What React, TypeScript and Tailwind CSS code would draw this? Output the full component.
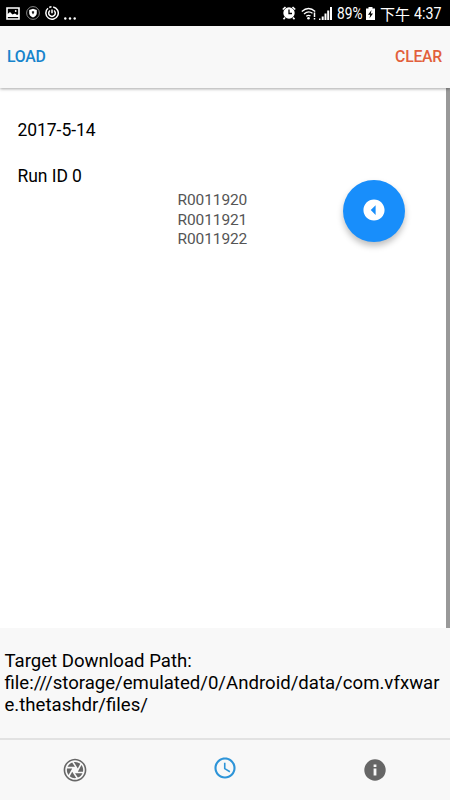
import { IoMdAperture, IoMdArrowDropleftCircle, IoMdTime } from "react-icons/io"

const files = ["R0011920", "R0011921", "R0011922"]

function StatusBar() {
  return (
    <div className="flex h-[26px] shrink-0 items-center bg-black pl-1.5 pr-2 text-white">
      {/* Notifications */}
      <svg className="h-[13px] w-3.5" viewBox="0 0 14 13" fill="none" stroke="currentColor">
        <path d="M1 1h12v11H1z" strokeWidth="1.6" />
        <path d="M1 10V7.5l3-2.5 2.5 2.5 2.5-1 2 1.5L13 7v3z" fill="currentColor" stroke="none" />
        <circle cx="9.7" cy="4" r="0.9" fill="currentColor" stroke="none" />
      </svg>
      <svg className="ml-1.5 h-3.5 w-3.5" viewBox="0 0 14 14" fill="none">
        <circle cx="7" cy="7" r="6.4" stroke="#aaa" strokeWidth="0.8" />
        <path d="M7 2.8l3.8 1.3v2.8c0 2-1.6 3.6-3.8 4.6-2.2-1-3.8-2.6-3.8-4.6V4.1z" fill="currentColor" />
        <path d="M5.9 5.3h2.2v1.5L7 8.6 5.9 6.8z" fill="#222" />
      </svg>
      <svg className="ml-[5px] h-3.5 w-3.5" viewBox="0 0 14 14" fill="none" stroke="currentColor">
        <path d="M8.2 0.9A6.2 6.2 0 1 1 3 2.3" strokeWidth="1.5" />
        <path d="M4.3 1.5A6.2 6.2 0 0 1 6.5 0.8" strokeWidth="1.5" />
        <path d="M5 4.5A3.3 3.3 0 1 0 9 4.5M7 3.5v3.8" strokeWidth="1.5" />
      </svg>
      <svg className="ml-[5px] mt-2.5 h-[3px] w-3" viewBox="0 0 12 3" fill="currentColor">
        <circle cx="1.3" cy="1.5" r="1.2" />
        <circle cx="6" cy="1.5" r="1.2" />
        <circle cx="10.7" cy="1.5" r="1.2" />
      </svg>

      <div className="flex-1" />

      {/* Alarm, wifi, signal */}
      <svg className="h-3.5 w-3.5" viewBox="0 0 14 14" fill="none" stroke="currentColor">
        <circle cx="7" cy="7" r="5.7" fill="currentColor" stroke="none" />
        <path d="M0.8 3.5L3.5 1M13.2 3.5L10.5 1M3 11.5L1.5 13.3M11 11.5l1.5 1.8" strokeWidth="1.7" />
        <path d="M7 3.5v4h3" stroke="#000" strokeWidth="1.3" />
      </svg>
      <svg className="ml-[5px] h-[13px] w-4" viewBox="0 0 16 13" fill="none" stroke="currentColor">
        <path d="M0.8 4.5Q7.5-1.5 14.2 4.5" strokeWidth="1.3" />
        <path d="M3 7Q7.5 3 11.5 6.3" strokeWidth="1.3" />
        <path d="M5.2 9.3Q7.5 7.5 9.5 9" strokeWidth="1.3" />
        <circle cx="7.5" cy="11.3" r="1.3" fill="currentColor" stroke="none" />
        <path d="M13.5 5.5v4.5M13.5 11v1.5" strokeWidth="1.5" />
      </svg>
      <svg className="ml-0.5 h-[13px] w-[13px]" viewBox="0 0 13 13" fill="currentColor">
        <path d="M0 11.5h1.5V13H0zM2.7 9.5h2V13h-2zM5.5 6.5h2V13h-2zM8.2 3.5h2V13h-2zM11 0h2v13h-2z" />
      </svg>
      <span className="ml-[5px] mt-[3px] w-[26px] origin-left scale-x-[0.83] whitespace-nowrap text-[16.5px] leading-none">89%</span>
      <svg className="ml-[3px] h-[13px] w-[9px]" viewBox="0 0 9 13">
        <path d="M0 1.5h2.5V0h4v1.5H9V13H0z" fill="currentColor" />
        <path d="M5.5 3L2 7.7h2.2L3.5 11.3 7 6.5H4.8z" fill="#000" />
      </svg>
      <span className="ml-[5px] w-7 whitespace-nowrap font-['Noto_Sans_CJK_TC',sans-serif] text-[15px] leading-none">下午</span>
      <span className="ml-1.5 mt-[3px] w-7 origin-left scale-x-[0.86] whitespace-nowrap text-[16.5px] leading-none">4:37</span>
    </div>
  )
}

function Header() {
  return (
    <header className="relative z-10 flex h-[62px] shrink-0 items-center justify-between bg-[#f8f8f8] pl-[7px] pr-2 text-[15.8px] font-medium tracking-[-0.25px] shadow-[0_1px_3px_rgba(0,0,0,0.35)]">
      <button className="text-[#1784cc]">LOAD</button>
      <button className="text-[#e2603c]">CLEAR</button>
    </header>
  )
}

function InfoIcon() {
  return (
    <svg className="mt-[19px] h-[22px] w-[22px]" viewBox="0 0 22 22">
      <circle cx="11" cy="11" r="10.7" fill="currentColor" />
      <path d="M9.6 5.4h2.8v2.5H9.6zM9.6 9.6h2.8v6.8H9.6z" fill="#f8f8f8" />
    </svg>
  )
}

export default function App() {
  return (
    <div className="flex h-[800px] w-[450px] flex-col overflow-hidden bg-white font-[Roboto,sans-serif] text-black">
      <StatusBar />
      <Header />

      <main className="flex flex-1 justify-between">
        <div className="pl-[17.5px] pt-[31px] text-[17.5px] leading-[22px] tracking-[-0.06px]">
          <h2>2017-5-14</h2>
          <h3 className="mt-6">Run ID 0</h3>
          <ul className="ml-[160px] mt-1 text-[15.5px] leading-[19.5px] tracking-[-0.1px] text-[#555]">
            {files.map((file) => (
              <li key={file}>{file}</li>
            ))}
          </ul>
        </div>
        <div className="flex">
          <button className="mr-[41.5px] mt-[92px] flex h-[61.5px] w-[61.5px] items-center justify-center rounded-full bg-[#188efb] pb-0.5 text-white shadow-[0_4px_6px_rgba(0,0,0,0.25)]">
            <IoMdArrowDropleftCircle className="h-[26px] w-[26px]" />
          </button>
          {/* Scroll thumb */}
          <div className="w-1 bg-[#999]" />
        </div>
      </main>

      <section className="h-[110px] shrink-0 break-all bg-[#f8f8f8] pl-[4.5px] pr-1 pt-[22px] text-[18.6px] leading-[22px]">
        <p>Target Download Path:</p>
        <p>file:///storage/emulated/0/Android/data/com.vfxware.thetashdr/files/</p>
      </section>

      <nav className="grid h-[62px] shrink-0 grid-cols-3 justify-items-center border-t-2 border-[#e2e2e2] bg-[#f8f8f8] text-[#666]">
        <IoMdAperture className="mt-[17px] h-[26px] w-[26px]" />
        <IoMdTime className="mt-[15px] h-[26px] w-[26px] text-[#1688d4]" />
        <InfoIcon />
      </nav>
    </div>
  )
}
